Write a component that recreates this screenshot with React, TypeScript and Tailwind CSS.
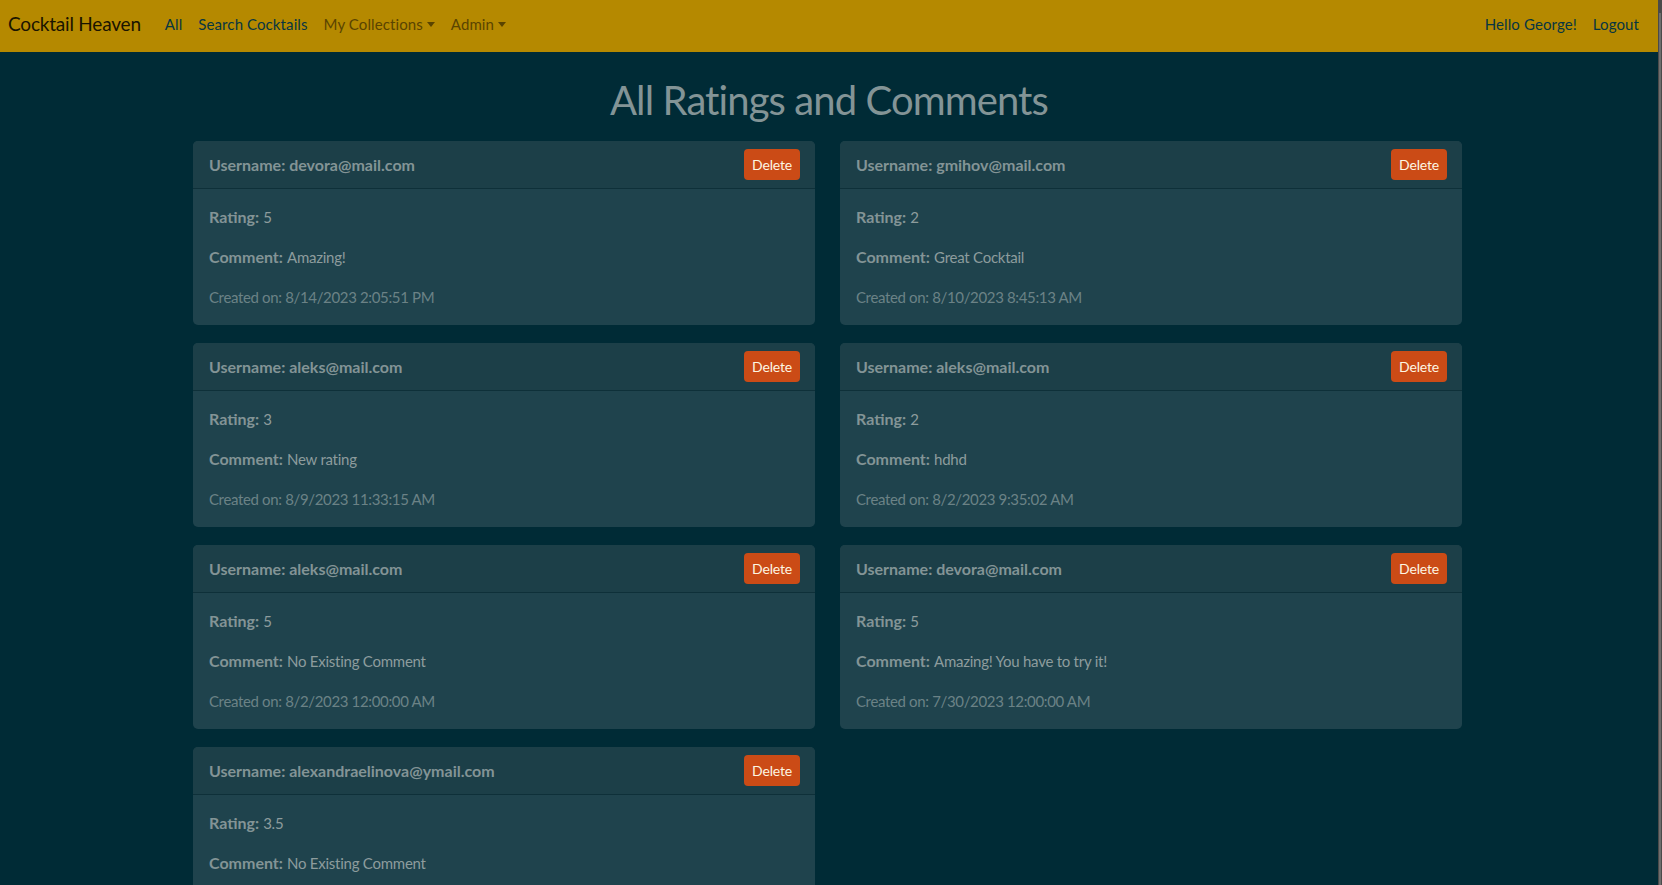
import React from "react";

type Item = { user: string; rating: string; comment: string; created?: string };

const items: Item[] = [
  { user: "devora@mail.com", rating: "5", comment: "Amazing!", created: "8/14/2023 2:05:51 PM" },
  { user: "gmihov@mail.com", rating: "2", comment: "Great Cocktail", created: "8/10/2023 8:45:13 AM" },
  { user: "aleks@mail.com", rating: "3", comment: "New rating", created: "8/9/2023 11:33:15 AM" },
  { user: "aleks@mail.com", rating: "2", comment: "hdhd", created: "8/2/2023 9:35:02 AM" },
  { user: "aleks@mail.com", rating: "5", comment: "No Existing Comment", created: "8/2/2023 12:00:00 AM" },
  { user: "devora@mail.com", rating: "5", comment: "Amazing! You have to try it!", created: "7/30/2023 12:00:00 AM" },
  { user: "alexandraelinova@ymail.com", rating: "3.5", comment: "No Existing Comment", created: "7/29/2023 12:00:00 AM" },
];

function Caret() {
  return (
    <span className="inline-block w-0 h-0 ml-[4px] align-[3px] border-x-[4.5px] border-x-transparent border-t-[5px] border-t-current" />
  );
}

function Card({ it }: { it: Item }) {
  return (
    <div className="rounded-[5px] bg-[#1f434d] overflow-hidden">
      <div className="h-[48px] flex items-center justify-between pl-4 pr-[15px] bg-[#1c3f48] border-b border-[#0e3039]">
        <span className="font-bold text-[16px] text-[#839496]">Username: {it.user}</span>
        <button className="h-[31px] w-[56px] rounded-[4px] bg-[#cb4b16] text-[#fdf6e3] text-[14px] tracking-[-0.2px] leading-none">Delete</button>
      </div>
      <div className="p-4 text-[16px] leading-[24px] text-[#839496]">
        <p className="mb-4">
          <span className="font-bold">Rating:</span>{" "}
          <span className="text-[15px] tracking-[-0.25px] text-[#8d9c9d]">{it.rating}</span>
        </p>
        <p className="mb-4">
          <span className="font-bold">Comment:</span>{" "}
          <span className="text-[15px] tracking-[-0.25px] text-[#8d9c9d]">{it.comment}</span>
        </p>
        <p className="text-[15px] tracking-[-0.35px] text-[#6b8286]">Created on: {it.created}</p>
      </div>
    </div>
  );
}

export default function App() {
  return (
    <div className="flex h-[885px] overflow-hidden bg-[#002b36]" style={{ fontFamily: "Lato, 'Noto Sans', sans-serif" }}>
      <div className="flex-1 min-w-0 overflow-hidden">
        <nav className="h-[52px] bg-[#b58900] flex items-center pl-2 pr-[11px] pb-[4px] text-[15px] tracking-[0.1px]">
          <span className="text-[19px] tracking-[-0.2px] text-[#1a1400] mr-4">Cocktail Heaven</span>
          <a className="px-2 text-[#073642]">All</a>
          <a className="px-2 text-[#073642]">Search Cocktails</a>
          <a className="px-2 text-[#5a4400]">My Collections<Caret /></a>
          <a className="px-2 text-[#5a4400]">Admin<Caret /></a>
          <div className="flex-1" />
          <a className="px-2 text-[#073642]">Hello George!</a>
          <a className="px-2 text-[#073642]">Logout</a>
        </nav>
        <h1 className="mt-6 mb-[17px] text-center text-[40px] tracking-[-0.9px] leading-[48px] text-[#839496] font-normal">
          All Ratings and Comments
        </h1>
        <div className="ml-[193px] w-[1269px] grid grid-cols-2 gap-x-[25px] gap-y-[18px]">
          {items.map((it, i) => (
            <Card key={i} it={it} />
          ))}
        </div>
      </div>
      <div className="w-[4px] bg-[#4a4a4a] flex">
        <div className="mt-[13px] ml-[1px] w-[2px] h-full bg-[#6e6e6e]" />
      </div>
    </div>
  );
}
